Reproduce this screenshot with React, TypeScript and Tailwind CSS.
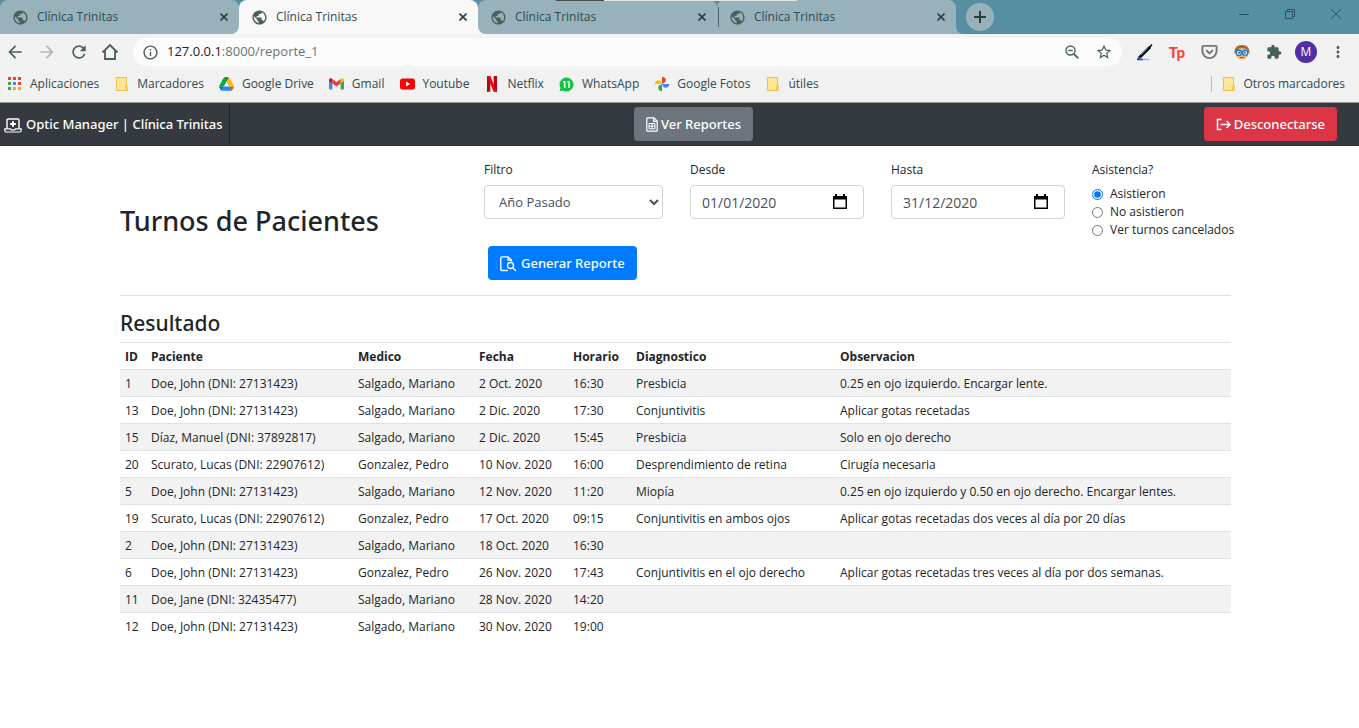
import { MdPublic, MdArrowBack, MdArrowForward, MdRefresh, MdInfoOutline, MdStarBorder, MdExtension, MdMoreVert } from 'react-icons/md';

const tabs = [
  { id: 1, active: false, shape: 'rounded-br-lg' },
  { id: 2, active: true, shape: '' },
  { id: 3, active: false, shape: 'rounded-bl-lg' },
  { id: 4, active: false, shape: '' },
];

const rows = [
  ['1', 'Doe, John (DNI: 27131423)', 'Salgado, Mariano', '2 Oct. 2020', '16:30', 'Presbicia', '0.25 en ojo izquierdo. Encargar lente.'],
  ['13', 'Doe, John (DNI: 27131423)', 'Salgado, Mariano', '2 Dic. 2020', '17:30', 'Conjuntivitis', 'Aplicar gotas recetadas'],
  ['15', 'Díaz, Manuel (DNI: 37892817)', 'Salgado, Mariano', '2 Dic. 2020', '15:45', 'Presbicia', 'Solo en ojo derecho'],
  ['20', 'Scurato, Lucas (DNI: 22907612)', 'Gonzalez, Pedro', '10 Nov. 2020', '16:00', 'Desprendimiento de retina', 'Cirugía necesaria'],
  ['5', 'Doe, John (DNI: 27131423)', 'Salgado, Mariano', '12 Nov. 2020', '11:20', 'Miopía', '0.25 en ojo izquierdo y 0.50 en ojo derecho. Encargar lentes.'],
  ['19', 'Scurato, Lucas (DNI: 22907612)', 'Gonzalez, Pedro', '17 Oct. 2020', '09:15', 'Conjuntivitis en ambos ojos', 'Aplicar gotas recetadas dos veces al día por 20 días'],
  ['2', 'Doe, John (DNI: 27131423)', 'Salgado, Mariano', '18 Oct. 2020', '16:30', '', ''],
  ['6', 'Doe, John (DNI: 27131423)', 'Gonzalez, Pedro', '26 Nov. 2020', '17:43', 'Conjuntivitis en el ojo derecho', 'Aplicar gotas recetadas tres veces al día por dos semanas.'],
  ['11', 'Doe, Jane (DNI: 32435477)', 'Salgado, Mariano', '28 Nov. 2020', '14:20', '', ''],
  ['12', 'Doe, John (DNI: 27131423)', 'Salgado, Mariano', '30 Nov. 2020', '19:00', '', ''],
];

const columns = [
  { label: 'ID', width: 'w-[26px]' },
  { label: 'Paciente', width: 'w-[207px]' },
  { label: 'Medico', width: 'w-[121px]' },
  { label: 'Fecha', width: 'w-[94px]' },
  { label: 'Horario', width: 'w-[63px]' },
  { label: 'Diagnostico', width: 'w-[204px]' },
  { label: 'Observacion', width: '' },
];

const FolderIcon = () => (
  <svg viewBox="0 0 14 14" className="h-[14px] w-[14px]">
    <path d="M1.5.5h10v9h1v4h-11z" fill="#ffe694" stroke="#e8c34b" />
    <path d="M10.5 13V9.5h1" fill="none" stroke="#e8c34b" />
  </svg>
);

const AppsIcon = () => (
  <svg viewBox="0 0 14 14" className="h-[14px] w-[14px]">
    <path d="M0 0h3v3H0zM5 0h3v3H5zM10 0h3v3h-3z" fill="#ea4335" />
    <path d="M0 5h3v3H0zM0 10h3v3H0z" fill="#34a853" />
    <path d="M5 5h3v3H5z" fill="#4285f4" />
    <path d="M10 5h3v3h-3z" fill="#ea4335" />
    <path d="M5 10h3v3H5zM10 10h3v3h-3z" fill="#f9ab00" />
  </svg>
);

const DriveIcon = () => (
  <svg viewBox="0 0 87 78" className="h-[14px] w-[15px]">
    <path d="m6.6 66.9 3.85 6.65c.8 1.4 1.95 2.5 3.3 3.3L27.5 53H0c0 1.55.4 3.1 1.2 4.5z" fill="#0066da" />
    <path d="M43.65 25 29.9 1.2c-1.35.8-2.5 1.9-3.3 3.3L1.2 48.5A9 9 0 0 0 0 53h27.5z" fill="#00ac47" />
    <path d="M73.55 76.8c1.35-.8 2.5-1.9 3.3-3.3l9.25-16c.8-1.4 1.2-2.95 1.2-4.5H59.8l5.85 11.5z" fill="#ea4335" />
    <path d="M43.65 25 57.4 1.2C56.05.4 54.5 0 52.9 0H34.4c-1.6 0-3.15.45-4.5 1.2z" fill="#00832d" />
    <path d="M59.8 53H27.5L13.75 76.8c1.35.8 2.9 1.2 4.5 1.2h50.8c1.6 0 3.15-.45 4.5-1.2z" fill="#2684fc" />
    <path d="M73.4 26.5 60.7 4.5c-.8-1.4-1.95-2.5-3.3-3.3L43.65 25 59.8 53h27.45c0-1.55-.4-3.1-1.2-4.5z" fill="#ffba00" />
  </svg>
);

const GmailIcon = () => (
  <svg viewBox="0 0 15 12" className="h-[12px] w-[15px]">
    <path d="M0 2v8.5c0 .6.4 1 1 1h2.4V5z" fill="#4285f4" />
    <path d="M15 2v8.5c0 .6-.4 1-1 1h-2.4V5z" fill="#34a853" />
    <path d="M11.6 1.5v4L15 3V1.8C15 .4 13.4-.3 12.3.5z" fill="#fbbc04" />
    <path d="M3.4 5.5V1l4.1 3 4.1-3v4.5l-4.1 3z" fill="#ea4335" />
    <path d="M0 1.8V3l3.4 2.5V1L2.7.5C1.6-.3 0 .4 0 1.8z" fill="#c5221f" />
  </svg>
);

const YoutubeIcon = () => (
  <svg viewBox="0 0 15 12" className="h-[12px] w-[15px]">
    <rect width="15" height="11" y=".5" rx="2.5" fill="#f00" />
    <path d="m6 3.5 4 2.5-4 2.5z" fill="#fff" />
  </svg>
);

const NetflixIcon = () => (
  <svg viewBox="0 0 10 16" className="h-[16px] w-[10px]">
    <path d="M0 0h3.3v15.5L0 16zM6.7 0H10v16l-3.3-.5z" fill="#b1060f" />
    <path d="M0 0h3.3L10 16l-3.5-.5z" fill="#e50914" />
  </svg>
);

const WhatsappIcon = () => (
  <svg viewBox="0 0 15 15" className="h-[15px] w-[15px]">
    <path d="M7.5.5a7 7 0 1 1-3.4 13.1L.5 14.5l1-3.500A7 7 0 0 1 7.5.5z" fill="#12c245" />
    <path d="M4 4.7h1.700V11M8.300 4.700H10V11" fill="none" stroke="#fff" strokeWidth="1.5" />
  </svg>
);

const PhotosIcon = () => (
  <svg viewBox="0 0 16 16" className="h-[16px] w-[16px]">
    <path d="M8 8V.7a3.800 3.800 0 0 1 3.600 5.100L8 8z" fill="#ea4335" />
    <path d="M8 8h7.300a3.800 3.800 0 0 1-5.600 3.300z" fill="#4285f4" />
    <path d="M8 8v7.300a3.800 3.800 0 0 1-3.300-5.600z" fill="#34a853" />
    <path d="M8 8H.7a3.800 3.800 0 0 1 5.600-3.300z" fill="#fbbc04" />
  </svg>
);

const bookmarks = [
  { label: 'Aplicaciones', icon: <AppsIcon /> },
  { label: 'Marcadores', icon: <FolderIcon /> },
  { label: 'Google Drive', icon: <DriveIcon /> },
  { label: 'Gmail', icon: <GmailIcon /> },
  { label: 'Youtube', icon: <YoutubeIcon /> },
  { label: 'Netflix', icon: <NetflixIcon /> },
  { label: 'WhatsApp', icon: <WhatsappIcon /> },
  { label: 'Google Fotos', icon: <PhotosIcon /> },
  { label: 'útiles', icon: <FolderIcon /> },
];

const CloseIcon = () => (
  <svg viewBox="0 0 8 8" className="h-2 w-2" stroke="#25413f" strokeWidth="1.6">
    <path d="m.5.5 7 7M7.5.5l-7 7" />
  </svg>
);

const HomeIcon = () => (
  <svg viewBox="0 0 18 18" className="h-[18px] w-[18px]" fill="none" stroke="currentColor" strokeWidth="1.8">
    <path d="M1.500 9.500 9 2l7.500 7.500M4 8v8h10V8" />
  </svg>
);

const ZoomOutIcon = () => (
  <svg viewBox="0 0 14 14" className="h-[14px] w-[14px]" fill="none" stroke="currentColor" strokeWidth="1.4">
    <circle cx="5.500" cy="5.500" r="4.500" />
    <path d="M3.200 5.500h4.600" />
    <path d="m8.800 8.800 4.500 4.500" strokeWidth="1.800" />
  </svg>
);

const PenIcon = () => (
  <svg viewBox="0 0 17 17" className="h-[17px] w-[17px]">
    <path d="M1 15.500h12" stroke="#9db4f0" strokeWidth="1.5" />
    <path d="M1 15.500h6" stroke="#2b4fd8" strokeWidth="1.5" />
    <path d="M3.500 13.500 14 3" stroke="#0b0d14" strokeWidth="3" />
    <path d="m13.500 3.500 2.500-3" stroke="#0b0d14" strokeWidth="1.5" />
    <path d="m5 11 7-7.500" stroke="#3f8ee0" />
    <path d="m1 15.800 1.300-3.800 2.500 2.500z" fill="#2b4fd8" />
  </svg>
);

const PocketIcon = () => (
  <svg viewBox="0 0 18 16" className="h-[16px] w-[17px]" fill="none" stroke="#757575" strokeWidth="2">
    <path d="M2.500 1.500h13a1 1 0 0 1 1 1V7a7.500 7.500 0 0 1-15 0V2.500a1 1 0 0 1 1-1z" />
    <path d="m5.500 6 3.500 3.500L12.500 6" />
  </svg>
);

const FaceIcon = () => (
  <svg viewBox="0 0 16 16" className="h-[16px] w-[16px]">
    <path d="M2 8h12c1 4-2 7.500-6 7.500S1 12 2 8z" fill="#f3b06f" />
    <path d="M.5 10C0 4 3 1 8 1s8 3 7.500 9L13 5.500 8 4.500 4 6z" fill="#a9672b" />
    <path d="M5 4.500h6l2 3H3z" fill="#f3c08b" />
    <circle cx="4.800" cy="8.800" r="2.600" fill="#fff" stroke="#1779c4" strokeWidth="1.4" />
    <circle cx="11.200" cy="8.800" r="2.600" fill="#fff" stroke="#1779c4" strokeWidth="1.4" />
    <circle cx="5" cy="8.800" r="1" fill="#17619c" />
    <circle cx="11" cy="8.800" r="1" fill="#17619c" />
    <path d="M6 13.500h4" stroke="#b5532c" />
  </svg>
);

const LaptopMedicalIcon = () => (
  <svg viewBox="0 0 18 15" className="h-[15px] w-[18px]" fill="none" stroke="currentColor">
    <path d="M3 10.500V2.200C3 1.500 3.500 1 4.200 1h9.600c.7 0 1.200.5 1.200 1.200v8.300" strokeWidth="1.4" />
    <path d="M.8 10.800h5.700l.8 1h3.400l.8-1h5.700v1.400c0 1-.7 1.800-1.700 1.800h-13c-1 0-1.700-.8-1.700-1.800z" strokeWidth="1.2" />
    <path d="M9 3.200v5.600M6.200 6h5.600" strokeWidth="2" />
  </svg>
);

const SpreadsheetIcon = () => (
  <svg viewBox="0 0 12 15" className="h-[15px] w-[12px]" fill="none" stroke="currentColor" strokeWidth="1.2">
    <path d="M.8 1.600c0-.5.3-.8.8-.8H8l3.200 3.200v9.400c0 .5-.3.800-.8.800H1.600c-.5 0-.8-.3-.8-.8z" />
    <path d="M7.700 1v3.300H11" />
    <path d="M3 6.500h6v5.300H3zM3 9.200h6M6 6.500v5.300" strokeWidth="1" />
  </svg>
);

const LogoutIcon = () => (
  <svg viewBox="0 0 15 13" className="h-[13px] w-[15px]" fill="none" stroke="currentColor" strokeWidth="1.5">
    <path d="M5.500 1.500h-4v10h4M4.500 6.500H14M10.500 3 14 6.500 10.500 10" />
  </svg>
);

const FileSearchIcon = () => (
  <svg viewBox="0 0 17 16" className="h-[16px] w-[17px]" fill="none" stroke="currentColor" strokeWidth="1.3">
    <path d="M8 14.500H1.700c-.5 0-.9-.4-.9-.9V1.700c0-.5.4-.9.9-.9H8L11.500 4v1.500" />
    <path d="M8 1.200v3h3" />
    <circle cx="10.500" cy="9.500" r="3" />
    <path d="m12.800 11.800 3.200 3.200" />
  </svg>
);

const CalendarIcon = () => (
  <svg viewBox="0 0 14 16" className="h-[16px] w-[14px] shrink-0">
    <path d="M2 0h2v2h6V0h2v2h2v13H0V2h2zM1.500 5.500v8h11v-8z" fill="#000" fillRule="evenodd" />
  </svg>
);

const Tab = ({ active, shape }: { active: boolean; shape: string }) => (
  <div className="w-[239px] shrink-0 bg-linear-to-b from-[#578fa2] from-50% to-[#f5f5f5] to-50%">
    <div className={`flex h-[34px] items-center rounded-t-lg pr-[11px] pl-3 ${shape} ${active ? 'bg-[#f8f8f8]' : 'bg-[#97b2ba]'}`}>
      <MdPublic className="h-[17px] w-[17px] text-[#49605b]" />
      <span className="ml-2 flex-1 text-xs text-[#2e4a50]">Clínica Trinitas</span>
      <button aria-label="Cerrar pestaña"><CloseIcon /></button>
    </div>
  </div>
);

const DateField = ({ id, label, value }: { id: string; label: string; value: string }) => (
  <div className="w-[174px] shrink-0">
    <label htmlFor={id} className="mb-[5px] block leading-5">{label}</label>
    <div className="flex h-[34px] items-center rounded border border-[#ced4da] pr-4 pl-[11px] text-[#495057]">
      <input id={id} defaultValue={value} className="w-full min-w-0 pt-px text-sm outline-none" />
      <CalendarIcon />
    </div>
  </div>
);

const Browser = () => (
  <div className="relative text-xs text-[#2e4a50]">
    {/* edge of the window behind */}
    <div className="absolute top-0 left-[556px] flex h-px">
      <span className="w-12 bg-[#4a4f48]" />
      <span className="w-[193px] bg-[#e2e6e4]" />
    </div>
    <div className="flex items-center bg-[#578fa2]">
      {tabs.map(({ id, active, shape }) => (
        <Tab key={id} active={active} shape={shape} />
      ))}
      <span className="absolute top-[7px] left-[718px] h-5 w-px bg-[#4c6670]" />
      <svg viewBox="0 0 8 8" className="h-2 w-2 self-end" fill="#97b2ba"><path d="M0 0c0 5 3 8 8 8H0z" /></svg>
      <button aria-label="Nueva pestaña" className="ml-[2px] flex h-7 w-7 items-center justify-center rounded-full bg-[#97b2ba]">
        <svg viewBox="0 0 12 12" className="h-3 w-3" stroke="#25413f" strokeWidth="2"><path d="M6 0v12M0 6h12" /></svg>
      </button>
      <div className="ml-auto flex items-center gap-9 pr-[18px] pb-[6px]">
        <svg viewBox="0 0 10 10" className="h-[10px] w-[10px]" stroke="#2e5360"><path d="M0 5.500h10" /></svg>
        <svg viewBox="0 0 10 10" className="h-[10px] w-[10px]" stroke="#2e5360" fill="none"><path d="M.5 2.500h7v7h-7zM2.500 2.500v-2h7v7h-2" /></svg>
        <svg viewBox="0 0 10 10" className="h-[10px] w-[10px]" stroke="#2e5360"><path d="m0 0 10 10M10 0 0 10" /></svg>
      </div>
    </div>
    <div className="flex h-9 items-center bg-[#f2f2f2] pr-3 pl-[5px] text-[#49605b]">
      <div className="flex items-center gap-3 pr-[14px]">
        <MdArrowBack className="h-5 w-5" />
        <MdArrowForward className="h-5 w-5 text-[#b0b5b4]" />
        <MdRefresh className="h-5 w-5" />
        <HomeIcon />
      </div>
      <div className="flex h-7 flex-1 items-center rounded-full bg-[#fcfcfc] px-[9px]">
        <MdInfoOutline className="h-[17px] w-[17px]" />
        <div className="relative ml-2 flex-1 text-[13px]">
          <input aria-label="Dirección" defaultValue="127.0.0.1:8000/reporte_1" className="w-full text-[#6b7573] outline-none" />
          <span aria-hidden="true" className="pointer-events-none absolute left-0 bg-[#fcfcfc] text-[#202124]">127.0.0.1</span>
        </div>
        <span className="mr-4"><ZoomOutIcon /></span>
        <MdStarBorder className="h-[18px] w-[18px]" />
      </div>
      <div className="flex items-center gap-4 pl-[14px]">
        <PenIcon />
        <span className="font-['Lato',sans-serif] text-[15px] leading-4 font-black text-[#fa4141]">Tp</span>
        <PocketIcon />
        <FaceIcon />
        <MdExtension className="h-4 w-4" />
      </div>
      <span className="ml-[13px] flex h-[22px] w-[22px] items-center justify-center rounded-full bg-[#512da8] text-white">M</span>
      <MdMoreVert className="ml-3 h-[18px] w-[18px]" />
    </div>
    <div className="flex h-[33px] items-center border-b border-[#9a9a9a] bg-[#f1f1f1] pr-[14px] pb-1 pl-[7px]">
      <div className="flex items-center gap-[15px]">
        {bookmarks.map(({ label, icon }) => (
          <a key={label} href="#" className="flex items-center gap-[7px]">
            <span className="flex w-4 justify-center">{icon}</span>
            {label}
          </a>
        ))}
      </div>
      <a href="#" className="ml-auto flex items-center gap-[7px] border-l border-[#bbbbbb] pl-[10px]">
        <FolderIcon />
        Otros marcadores
      </a>
    </div>
  </div>
);

export default function App() {
  return (
    <div className="min-h-screen bg-white font-['Open_Sans',sans-serif] text-xs text-[#212529]">
      <Browser />
      <nav className="flex h-[43px] items-center border-b border-[#2b3035] bg-[#343a40] font-['Noto_Sans',sans-serif] text-[13px] font-medium text-white">
        <div className="flex flex-1 self-stretch">
          <a href="#" className="flex items-center gap-1 border-r border-[#23272b] pt-[2px] pr-[6px] pl-1">
            <LaptopMedicalIcon />
            Optic Manager | Clínica Trinitas
          </a>
        </div>
        <button className="ml-[50px] flex h-[34px] items-center gap-[3px] rounded bg-[#6c757d] px-3 pt-px">
          <SpreadsheetIcon />
          Ver Reportes
        </button>
        <div className="flex flex-1 justify-end pr-[22px]">
          <button className="flex h-[34px] items-center gap-[3px] rounded bg-[#dc3545] px-3 pt-px">
            <LogoutIcon />
            Desconectarse
          </button>
        </div>
      </nav>
      <div className="pr-2">
        <main className="mx-auto max-w-[1111px] pt-[14px]">
          <form className="flex items-start border-b border-[#dfe0e1] pb-[15px]" onSubmit={(e) => e.preventDefault()}>
            <h1 className="w-[364px] shrink-0 pt-[40px] font-['Noto_Sans',sans-serif] text-[27px] leading-[42px] font-medium">Turnos de Pacientes</h1>
            <div className="min-w-0 flex-1">
              <div className="flex h-[86px] items-start gap-[27px]">
                <div className="w-[179px] shrink-0">
                  <label htmlFor="filtro" className="mb-[5px] block leading-5">Filtro</label>
                  <select id="filtro" className="h-[34px] w-full rounded border border-[#ced4da] bg-white pl-[10px] text-[13px] text-[#495057]">
                    <option>Año Pasado</option>
                  </select>
                </div>
                <DateField id="desde" label="Desde" value="01/01/2020" />
                <DateField id="hasta" label="Hasta" value="31/12/2020" />
                <fieldset className="whitespace-nowrap">
                  <legend className="mb-[5px] leading-5">Asistencia?</legend>
                  {['Asistieron', 'No asistieron', 'Ver turnos cancelados'].map((option, index) => (
                    <label key={option} className="flex h-[18px] items-center gap-[7px]">
                      <input type="radio" name="asistencia" defaultChecked={index === 0} className="h-[11px] w-[11px]" />
                      {option}
                    </label>
                  ))}
                </fieldset>
              </div>
              <button className="ml-1 flex h-[34px] items-center gap-1 rounded bg-[#007bff] px-3 pt-[2px] font-['Noto_Sans',sans-serif] text-[13px] font-medium text-white">
                <FileSearchIcon />
                Generar Reporte
              </button>
            </div>
          </form>
          <h2 className="pt-3 pb-[3px] font-['Noto_Sans',sans-serif] text-[21px] leading-[31px] font-medium">Resultado</h2>
          <table className="w-full table-fixed text-left">
            <thead>
              <tr className="h-[27px] border-t border-[#dee2e6]">
                {columns.map(({ label, width }) => (
                  <th key={label} className={`pt-[2px] pl-[5px] font-bold ${width}`}>{label}</th>
                ))}
              </tr>
            </thead>
            <tbody>
              {rows.map((row) => (
                <tr key={row[0]} className="h-[27px] border-t border-[#dee2e6] odd:bg-[#f2f2f2]">
                  {row.map((cell, index) => (
                    <td key={index} className="pt-[2px] pl-[5px] whitespace-nowrap">{cell}</td>
                  ))}
                </tr>
              ))}
            </tbody>
          </table>
        </main>
      </div>
    </div>
  );
}
